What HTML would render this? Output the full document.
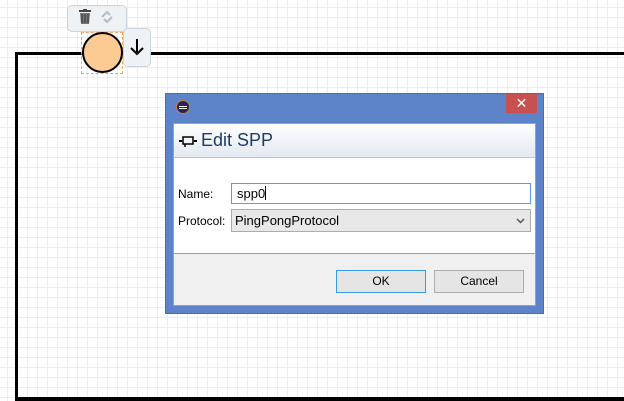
<!DOCTYPE html>
<html><head><style>
body{margin:0;width:624px;height:401px;overflow:hidden;position:relative;font-family:"Liberation Sans",sans-serif;
background-color:#fff;background-image:linear-gradient(#e6eef9 1px,transparent 1px),linear-gradient(90deg,#e6eef9 1px,transparent 1px);background-size:10px 10px;background-position:-3px -3px;}
.a{position:absolute;box-sizing:border-box}
</style></head><body>
<div class="a" style="left:15px;top:52px;width:609px;height:349px;border:3px solid #000;border-right:none;"></div>
<div class="a" style="left:15px;top:397px;width:609px;height:3px;background:#000"></div>
<div class="a" style="left:67px;top:5px;width:60px;height:27px;background:#eef2f5;border:1px solid #c8d4de;border-radius:5px;"></div>
<div class="a" style="left:79px;top:9px;width:12px;height:16px;">
<svg width="12" height="16"><rect x="0" y="1" width="12" height="2" fill="#444"/><rect x="4" y="0" width="4" height="2" fill="#444"/><path d="M1 4h10l-1 11H2z" fill="#777"/><path d="M3 5v9M6 5v9M9 5v9" stroke="#333" stroke-width="1"/></svg></div>
<svg class="a" style="left:99px;top:9px" width="16" height="16"><path d="M3 8l5-5 3 3M13 8l-5 5-3-3" stroke="#bbb" stroke-width="2" fill="none"/></svg>
<div class="a" style="left:123px;top:28px;width:28px;height:39px;background:#eef2f5;border:1px solid #c8d4de;border-radius:5px;"></div>
<svg class="a" style="left:129px;top:38px" width="16" height="18"><path d="M8 1v15M2 10l6 6 6-6" stroke="#000" stroke-width="2" fill="none"/></svg>
<div class="a" style="left:81px;top:32px;width:42px;height:42px;border:1px dashed #f4a460;"></div>
<div class="a" style="left:82px;top:32px;width:41px;height:41px;border-radius:50%;background:#fccb94;border:2px solid #000;"></div>

<div class="a" style="left:165px;top:93px;width:379px;height:221px;background:#5d83c9;border:1px solid #4a6db0"></div>
<div class="a" style="left:176px;top:100px;width:14px;height:14px;border-radius:50%;background:#2c2255;border:1px solid #c08040;"><div style="margin:5px 2px;height:1px;background:#fff;box-shadow:0 2px #fff"></div></div>
<div class="a" style="left:506px;top:94px;width:31px;height:19px;background:#c75050;color:#fff;text-align:center;font-size:14px;line-height:19px">✕</div>
<div class="a" style="left:173px;top:123px;width:363px;height:183px;background:#f0f0f0;border:1px solid #8aa;"></div>
<div class="a" style="left:174px;top:124px;width:361px;height:34px;background:linear-gradient(#fff,#e2e9f1);border-bottom:1px solid #b6c6d6;"></div>
<svg class="a" style="left:179px;top:134px" width="18" height="14"><path d="M0 7h3M15 7h3" stroke="#000" stroke-width="2"/><rect x="4" y="3" width="10" height="7" fill="none" stroke="#000" stroke-width="1.5"/><path d="M6 10v3" stroke="#000" stroke-width="1.5"/></svg>
<div class="a" style="left:201px;top:130px;font-size:18px;color:#1e3c68">Edit SPP</div>
<div class="a" style="left:174px;top:158px;width:361px;height:96px;background:#fff;border-bottom:1px solid #a0a0a0"></div>
<div class="a" style="left:178px;top:187px;font-size:12px">Name:</div>
<div class="a" style="left:231px;top:183px;width:300px;height:21px;border:1px solid #569de5;background:#fff;font-size:13px;padding:2px 5px">spp0<span style="display:inline-block;width:1px;height:14px;background:#000;vertical-align:-2px"></span></div>
<div class="a" style="left:178px;top:214px;font-size:12px">Protocol:</div>
<div class="a" style="left:231px;top:209px;width:300px;height:23px;border:1px solid #acacac;background:#e8e8e8;font-size:13px;padding:3px 3px">PingPongProtocol<svg style="position:absolute;right:5px;top:8px" width="9" height="6"><path d="M1 1l3.5 3.5L8 1" stroke="#555" stroke-width="1.5" fill="none"/></svg></div>
<div class="a" style="left:336px;top:270px;width:90px;height:23px;border:1px solid #3c9be0;background:#e5e5e5;font-size:12px;text-align:center;line-height:21px">OK</div>
<div class="a" style="left:434px;top:270px;width:90px;height:23px;border:1px solid #adadad;background:#e5e5e5;font-size:12px;text-align:center;line-height:21px">Cancel</div>
</body></html>
